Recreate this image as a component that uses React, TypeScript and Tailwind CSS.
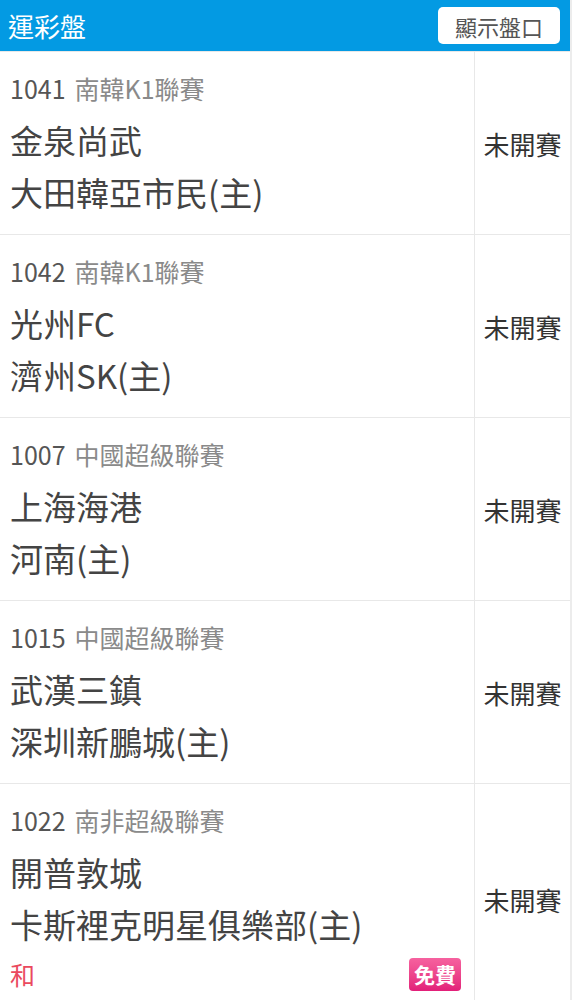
// 運彩盤 list: header bar + match rows with a status column on the right.
const FONT = '"Noto Sans CJK TC", "Noto Sans", sans-serif';

type Match = {
  no: string;
  league: string;
  away: string;
  home: string;
  extra?: boolean;
};

const matches: Match[] = [
  { no: '1041', league: '南韓K1聯賽', away: '金泉尚武', home: '大田韓亞市民(主)' },
  { no: '1042', league: '南韓K1聯賽', away: '光州FC', home: '濟州SK(主)' },
  { no: '1007', league: '中國超級聯賽', away: '上海海港', home: '河南(主)' },
  { no: '1015', league: '中國超級聯賽', away: '武漢三鎮', home: '深圳新鵬城(主)' },
  { no: '1022', league: '南非超級聯賽', away: '開普敦城', home: '卡斯裡克明星俱樂部(主)', extra: true },
];

export default function App() {
  return (
    <div className="flex min-h-screen bg-white" style={{ fontFamily: FONT }}>
      <div className="w-[570px] shrink-0">
        {/* Header */}
        <div className="flex h-[51px] items-center justify-between bg-[#039ae3] pl-2 pr-[10px]">
          <span className="text-[26px] leading-none text-white">運彩盤</span>
          <button className="flex h-[37px] w-[122px] items-center justify-center rounded-[5px] bg-white text-[22px] leading-none text-[#555]">
            顯示盤口
          </button>
        </div>

        {matches.map((m) => (
          <MatchRow key={m.no} m={m} />
        ))}
      </div>
      <div className="w-[2px] shrink-0 bg-[#ececec]" />
    </div>
  );
}

function MatchRow({ m }: { m: Match }) {
  return (
    <div className="flex border-t border-[#e8e8e8]">
      <div className="flex-1 pb-[16px] pl-[10px] pr-[13px] pt-[10px]">
        <div className="text-[25px] leading-[52px]">
          <span className="text-[#555]">{m.no}</span>
          <span className="ml-[9px] text-[#8a8a8a]">{m.league}</span>
        </div>
        <div className="text-[33px] leading-[52px] text-[#444]">{m.away}</div>
        <div className="text-[33px] leading-[52px] text-[#444]">{m.home}</div>
        {m.extra && (
          <div className="flex h-[48px] items-center justify-between">
            <span className="text-[25px] leading-none text-[#ea4a5e]">和</span>
            <span className="flex h-[33px] w-[52px] items-center justify-center rounded-[4px] bg-gradient-to-b from-[#f6619f] to-[#e21f79] text-[21px] font-bold leading-none text-white">
              免費
            </span>
          </div>
        )}
      </div>
      <div className="flex w-[96px] shrink-0 items-center justify-center border-l border-[#e8e8e8] text-[26px] text-[#333]">
        未開賽
      </div>
    </div>
  );
}
